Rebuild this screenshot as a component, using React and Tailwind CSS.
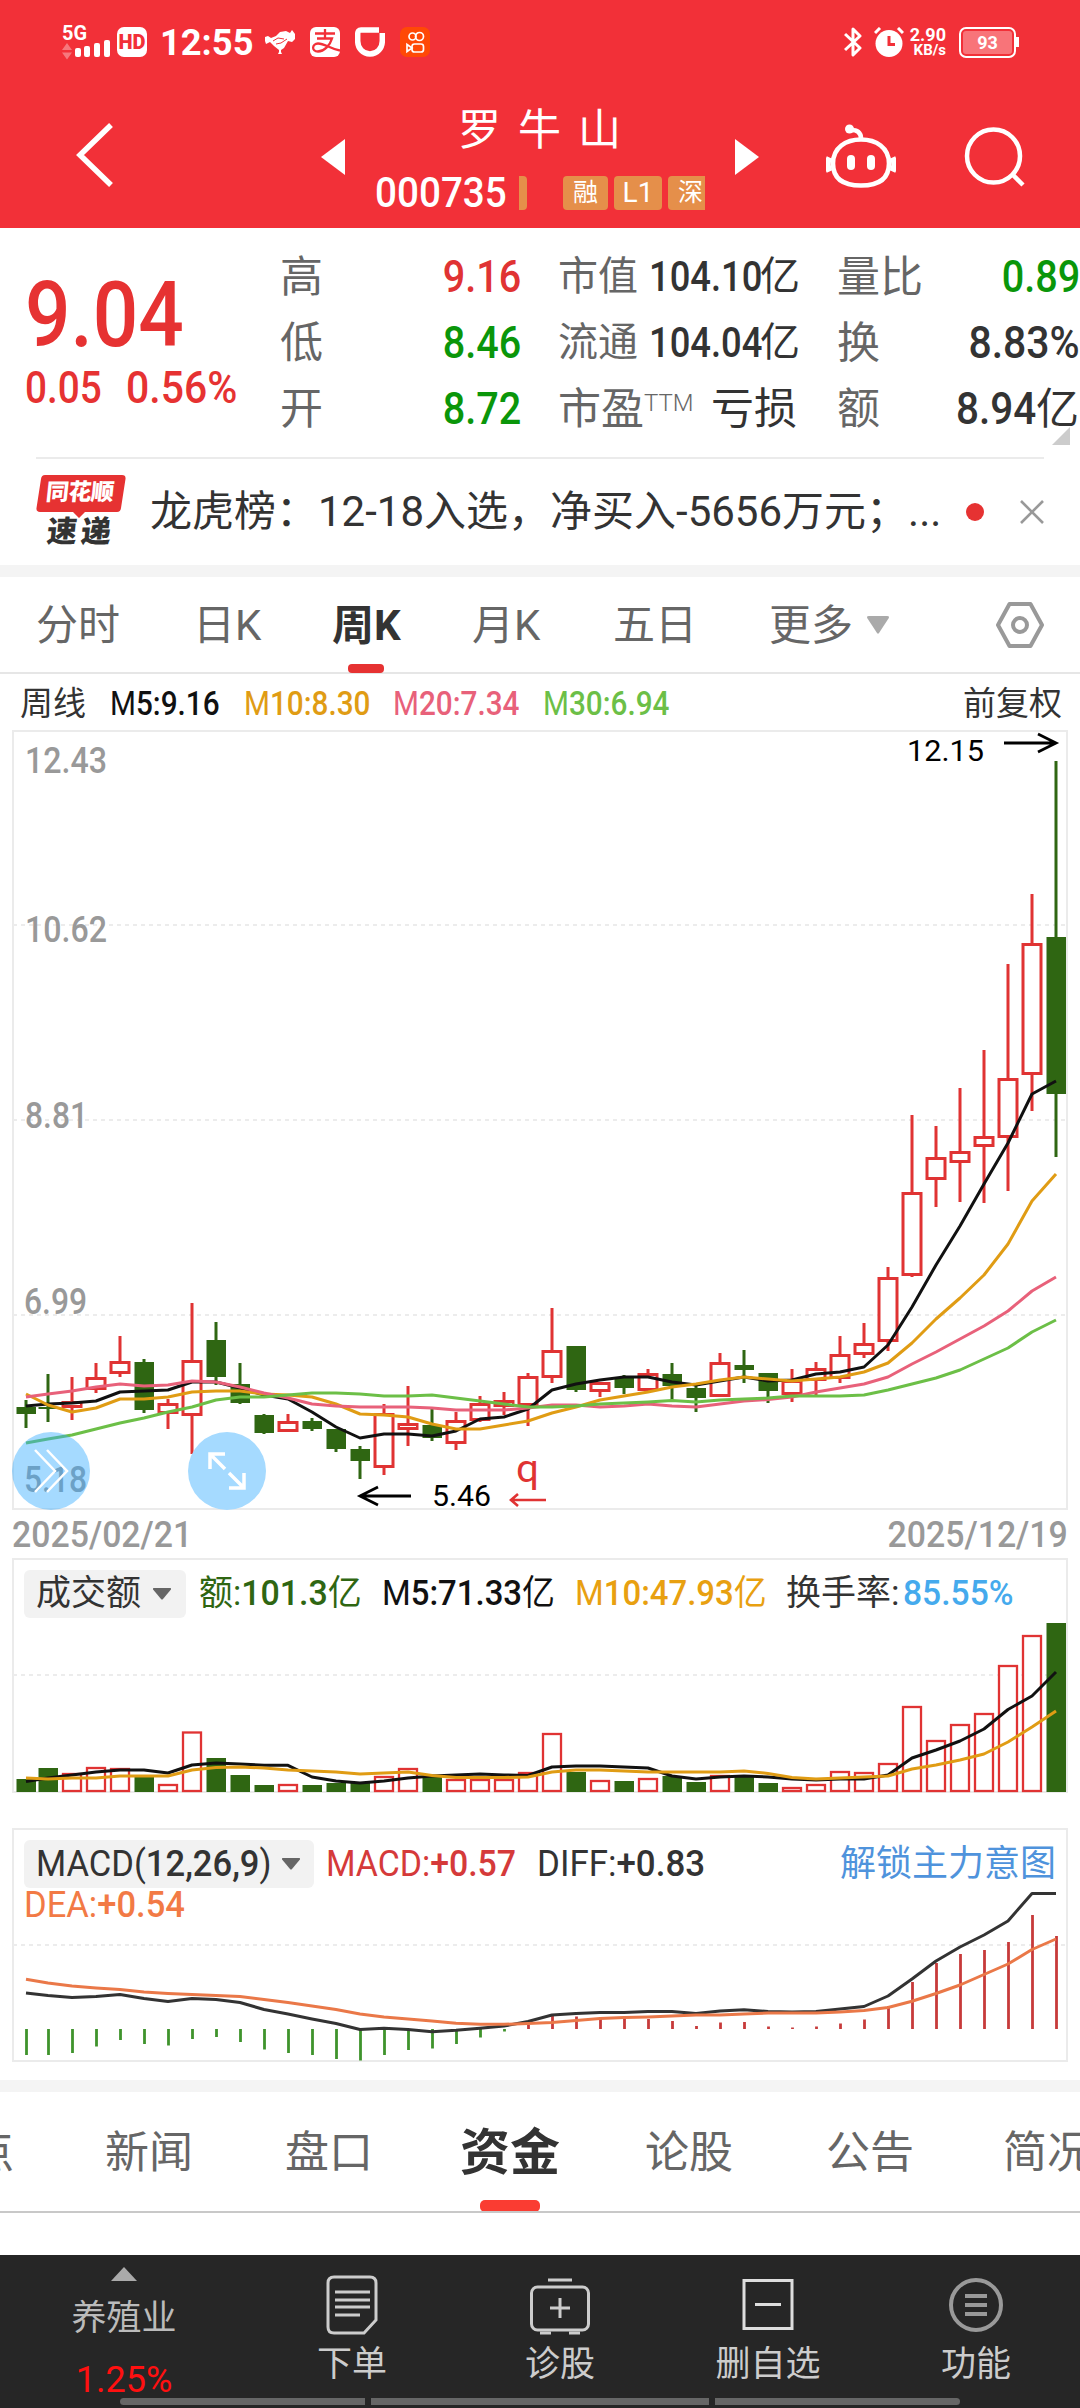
const RED = '#e03333';
const GREEN = '#2f6612';

// [direction, high, low, body top, body bottom]
const candles = [
  ['d', 1400, 1428, 1407, 1414], ['d', 1374, 1422, 1407, 1409], ['u', 1377, 1420, 1401, 1408],
  ['u', 1363, 1393, 1377, 1390], ['u', 1336, 1377, 1361, 1374], ['d', 1359, 1413, 1362, 1410],
  ['u', 1399, 1429, 1403, 1414], ['u', 1303, 1454, 1360, 1416], ['d', 1322, 1385, 1340, 1377],
  ['d', 1363, 1404, 1384, 1403], ['d', 1414, 1434, 1415, 1433], ['u', 1414, 1432, 1421, 1432],
  ['d', 1418, 1431, 1421, 1429], ['d', 1429, 1452, 1429, 1449], ['d', 1446, 1479, 1449, 1461],
  ['u', 1404, 1475, 1413, 1468], ['u', 1386, 1446, 1423, 1430], ['d', 1409, 1441, 1425, 1438],
  ['u', 1412, 1450, 1420, 1444], ['u', 1396, 1422, 1403, 1421], ['u', 1392, 1415, 1400, 1407],
  ['u', 1373, 1426, 1376, 1406], ['u', 1308, 1383, 1350, 1378], ['d', 1346, 1392, 1346, 1390],
  ['u', 1382, 1397, 1382, 1392], ['d', 1375, 1394, 1377, 1388], ['u', 1369, 1392, 1373, 1391],
  ['d', 1363, 1400, 1374, 1386], ['d', 1386, 1412, 1388, 1398], ['u', 1353, 1397, 1362, 1397],
  ['d', 1350, 1383, 1365, 1370], ['d', 1373, 1403, 1373, 1391], ['u', 1369, 1402, 1380, 1395],
  ['u', 1362, 1395, 1368, 1381], ['u', 1336, 1383, 1354, 1379], ['u', 1323, 1358, 1343, 1355],
  ['u', 1267, 1351, 1277, 1342], ['u', 1115, 1277, 1192, 1276], ['u', 1126, 1207, 1157, 1180],
  ['u', 1088, 1202, 1151, 1163], ['u', 1050, 1203, 1136, 1147], ['u', 964, 1191, 1078, 1138],
  ['u', 894, 1111, 943, 1075], ['d', 761, 1157, 937, 1094],
];

const ma5 = [1406, 1404, 1403, 1401, 1392, 1391, 1390, 1382, 1382, 1388, 1395, 1399, 1412, 1427, 1438, 1434, 1434, 1436, 1431, 1419, 1417, 1409, 1390, 1384, 1380, 1377, 1377, 1382, 1385, 1381, 1377, 1381, 1380, 1374, 1372, 1367, 1345, 1307, 1265, 1226, 1184, 1143, 1094, 1081];
const ma10 = [1394, 1405, 1412, 1408, 1399, 1399, 1397, 1392, 1391, 1391, 1394, 1395, 1397, 1404, 1414, 1415, 1417, 1424, 1429, 1429, 1425, 1421, 1413, 1407, 1400, 1396, 1392, 1387, 1384, 1380, 1377, 1379, 1381, 1379, 1377, 1372, 1363, 1343, 1319, 1298, 1275, 1244, 1201, 1174];
const ma20 = [1397, 1394, 1391, 1387, 1384, 1386, 1385, 1381, 1382, 1387, 1393, 1398, 1404, 1406, 1407, 1407, 1407, 1408, 1410, 1410, 1410, 1408, 1405, 1405, 1407, 1406, 1404, 1406, 1407, 1404, 1401, 1399.5, 1397, 1392, 1388, 1384, 1377, 1364, 1352, 1339, 1326, 1311, 1291, 1277];
const ma30 = [1443, 1439, 1435, 1429, 1423, 1418, 1412, 1407, 1400, 1397, 1397, 1395, 1393, 1393, 1394, 1396, 1396, 1395, 1398, 1401, 1404, 1407, 1407, 1406, 1404, 1403, 1402, 1400.5, 1402, 1400, 1399, 1398, 1396, 1396, 1396, 1395, 1390, 1384, 1378, 1370, 1359, 1348, 1332, 1320];

// heights above the baseline
const vol = [13, 24, 19, 25, 24, 15, 8, 60.5, 34, 17, 7, 8, 7, 9, 10, 16, 24, 15, 13, 13, 13, 20, 59, 20, 12, 11, 14, 16, 10, 17, 15, 9, 5, 8, 21, 20, 29, 86, 52, 68, 79, 127, 157, 169];
const vol5 = [10.5, 14, 17, 20, 22, 22, 19, 27, 29, 28, 26.7, 26.7, 15, 11, 9, 11, 14, 16, 17, 18, 17, 16.5, 25, 26, 26, 25, 24, 16, 13, 15, 16, 15, 13, 12, 13, 13, 17, 34, 42, 51, 63, 82.5, 96, 120];
const vol10 = [14, 13, 14, 14, 16, 16, 16, 22, 24.5, 25, 24, 22, 21, 20, 18, 19, 20, 16.5, 14.5, 14.5, 14.5, 15, 20, 22, 22, 21, 20, 20, 20, 20, 21, 18.6, 14.5, 13, 14, 15, 16, 23, 27, 32, 38, 50, 65, 81];
const macd = [-26, -26, -24, -17.5, -11, -15, -16.5, -10, -8, -13, -20.5, -24, -26, -30, -31.5, -26, -21, -19.5, -15, -8.5, -2.5, 4.5, 13, 12.5, 11.5, 10, 10, 8, 3, 6.5, 7, 2.5, 1.5, 2.5, 5.5, 9.5, 23, 47, 66, 75, 79, 87, 114, 93];
const diff = [36, 33.5, 31.5, 32.5, 34.5, 30.5, 27.5, 30.5, 29.5, 26.5, 19.5, 15, 10, 5.5, -0.5, 0.7, -0.5, -2.7, -1.3, 0.7, 3, 7.5, 14, 15.5, 16.5, 16.5, 17.5, 17.5, 15.5, 18, 19.3, 17.5, 17, 17.5, 20, 22.5, 33, 50, 68, 82, 94, 108, 135.5, 135.5];
const dea = [49.7, 46, 43, 41, 39.5, 37, 35.5, 34.5, 33.5, 32.5, 29.5, 26.5, 23, 19.5, 15, 12, 10, 8, 5.7, 4.7, 4.7, 5.5, 6.5, 8.5, 10.5, 11.5, 12, 13, 14, 14, 15, 16, 16, 16, 17, 18.5, 21.5, 27.7, 35.5, 44, 54.5, 65, 79.5, 90];

const xAt = (i) => (i === 0 ? 26 : 24 + i * 24);

const Line = ({ data, color, base }) => (
  <polyline
    points={data.map((v, i) => `${xAt(i)},${base ? base - v : v}`).join(' ')}
    fill="none"
    stroke={color}
    strokeWidth="3"
    strokeLinejoin="round"
  />
);

const Grid = ({ y }) => (
  <line x1="13" x2="1067" y1={y} y2={y} stroke="#ececec" strokeWidth="2" strokeDasharray="4 4" />
);

const Label = ({ x, y, w, size = 36, color = '#999', weight = 500, children }) => (
  <text x={x} y={y} textLength={w} lengthAdjust="spacingAndGlyphs" fontSize={size} fontWeight={weight} fill={color}>
    {children}
  </text>
);

const KChart = () => (
  <svg viewBox="12 730 1056 780" className="block w-[1056px] h-[780px] overflow-visible">
    <rect x="13" y="731" width="1054" height="778" fill="none" stroke="#ebebeb" strokeWidth="2" />
    <Grid y={925} />
    <Grid y={1120} />
    <Grid y={1315} />
    <Label x={25} y={773} w={82}>12.43</Label>
    <Label x={25} y={942} w={82}>10.62</Label>
    <Label x={25} y={1128} w={63}>8.81</Label>
    <Label x={24} y={1314} w={63}>6.99</Label>
    <Label x={24} y={1492} w={63}>5.18</Label>
    {candles.map(([dir, high, low, top, bottom], i) => {
      const x = xAt(i);
      return dir === 'd' ? (
        <g key={i} fill={GREEN}>
          <rect x={x - 1.5} y={high} width="3" height={low - high} />
          <rect x={x - 9.5} y={top} width="19.5" height={bottom - top} />
        </g>
      ) : (
        <g key={i} stroke={RED} strokeWidth="3">
          <path d={`M${x} ${high}V${top}M${x} ${bottom}V${low}`} />
          <rect x={x - 9} y={top + 1.5} width="18" height={bottom - top - 3} fill="#fff" />
        </g>
      );
    })}
    <Line data={ma5} color="#111" />
    <Line data={ma10} color="#e09c14" />
    <Line data={ma20} color="#e8617a" />
    <Line data={ma30} color="#6cbf47" />
    <Label x={907} y={761} w={77} size={30} color="#000" weight={400}>12.15</Label>
    <path d="M1004 743H1055M1038 734L1056 743L1038 752" fill="none" stroke="#000" strokeWidth="2.8" />
    <Label x={432} y={1506} w={59} size={30} color="#000" weight={400}>5.46</Label>
    <path d="M411 1496H361M378 1487L360 1496L378 1505" fill="none" stroke="#000" strokeWidth="2.8" />
    <Label x={516} y={1482} w={23} size={38} color={RED} weight={400}>q</Label>
    <path d="M546 1500H512M518 1494L511 1500L518 1506" fill="none" stroke={RED} strokeWidth="2.6" />
  </svg>
);

const VolumeChart = () => (
  <svg viewBox="12 1558 1056 236" className="block w-[1056px] h-[236px]">
    <path d="M13 1792V1559H1067V1792Z" fill="none" stroke="#ebebeb" strokeWidth="2" />
    <Grid y={1675} />
    {vol.map((h, i) =>
      candles[i][0] === 'd' ? (
        <rect key={i} x={xAt(i) - 9.5} y={1792 - h} width="19.5" height={h} fill={GREEN} />
      ) : (
        <rect key={i} x={xAt(i) - 9} y={1793 - h} width="18" height={h - 2} fill="#fff" stroke={RED} strokeWidth="2.3" />
      ),
    )}
    <Line data={vol5} base={1792} color="#111" />
    <Line data={vol10} base={1792} color="#e09c14" />
  </svg>
);

const MacdChart = () => (
  <svg viewBox="12 1828 1056 234" className="block w-[1056px] h-[234px]">
    <rect x="13" y="1829" width="1054" height="232" fill="none" stroke="#ebebeb" strokeWidth="2" />
    <Grid y={1945} />
    {macd.map((h, i) => (
      <line key={i} x1={xAt(i) + 0.5} x2={xAt(i) + 0.5} y1="2029" y2={2029 - h} stroke={h < 0 ? '#3f932c' : '#c73a3a'} strokeWidth="2.8" />
    ))}
    <Line data={diff} base={2029} color="#333" />
    <Line data={dea} base={2029} color="#ea7848" />
  </svg>
);

// Condensed text held in a box of its drawn width
const Cell = ({ className = '', inner = '', children }) => (
  <span className={`flex shrink-0 whitespace-nowrap ${className}`}>
    <span className={`inline-block ${inner}`}>{children}</span>
  </span>
);

const StatusBar = () => (
  <div className="flex h-[84px] items-center pl-[62px] text-white">
    <div className="w-[50px] h-[36px]">
      <svg viewBox="62 24 50 36" className="w-[50px] h-[36px] overflow-visible" fill="#fff">
        <text x="62" y="40" fontSize="20" fontWeight="700" textLength="25" lengthAdjust="spacingAndGlyphs">5G</text>
        <path d="M62 50l5-7 5 7zM62 52.500l5 7 5-7z" fillOpacity=".35" />
        <rect x="75" y="48" width="6" height="9" rx="2" />
        <rect x="84" y="46" width="6" height="11" rx="2" />
        <rect x="94" y="43" width="6" height="14" rx="2" />
        <rect x="104" y="40" width="6" height="17" rx="2" />
      </svg>
    </div>
    <span className="ml-[5px] flex size-[30px] items-center justify-center rounded-[7px] bg-white text-[20px] font-black text-[#f23038]">
      HD
    </span>
    <Cell className="ml-[13px] w-[95px]" inner="text-[37px] leading-none font-bold origin-left scale-x-[0.98]">12:55</Cell>
    <svg viewBox="0 0 30 24" className="ml-[10px] w-[30px] h-[24px]" fill="#fff">
      <path d="M0 7l3-1 3 2 5-2 4-4 6-1 4 2 2-3 3 4v5l-3 3-4-1-4 7-3 2v2l1 2h-4l1-2v-2l-5-4-4-4-4 2-1-3z" />
      <path d="M8 11l5-3 6 1M11 14l5-1 6-4" fill="none" stroke="#f23038" strokeWidth="1" />
    </svg>
    <svg viewBox="0 0 30 30" className="ml-[15px] size-[30px]">
      <rect width="30" height="30" rx="6" fill="#fff" />
      <path d="M5 6.500h20M15 2v9M7 11.500h15c-2 7-8 13-14 13-7 0-6-8 0-8 7 0 11 5 22 7" fill="none" stroke="#f23038" strokeWidth="2.300" />
    </svg>
    <svg viewBox="0 0 30 30" className="ml-[15px] size-[30px]" fill="none" stroke="#fff" strokeWidth="5.500">
      <path d="M24 3H6Q2.700 3 2.700 7v7c0 7 5 13 12.300 13s12.300-6 12.300-13V6" />
    </svg>
    <svg viewBox="0 0 30 30" className="ml-[15px] size-[30px]" fill="none" stroke="#fff" strokeWidth="1.700">
      <rect width="30" height="30" rx="7" fill="#ff4906" stroke="none" />
      <circle cx="12.500" cy="9.500" r="3.500" />
      <circle cx="19.500" cy="9.500" r="4" />
      <rect x="12" y="17" width="11.500" height="8" rx="2.500" />
      <path d="M12 21L7 17.500v7z" />
    </svg>

    <svg viewBox="0 0 18 30" className="ml-[414px] w-[18px] h-[30px]" fill="none" stroke="#fff" strokeWidth="3" strokeLinejoin="round">
      <path d="M1 7l15 14-7 7V2l7 7L1 23" />
    </svg>
    <svg viewBox="0 0 30 30" className="ml-[12px] size-[30px]">
      <circle cx="15" cy="16.500" r="13.500" fill="#fff" />
      <path d="M1 6l5-5M29 6l-5-5" stroke="#fff" strokeWidth="3" />
      <path d="M15 9v8.500h6" fill="none" stroke="#f23038" strokeWidth="3" />
    </svg>
    <div className="ml-[6px] flex w-[36px] flex-col items-end font-bold">
      <span className="text-[18px] leading-[17px]">2.90</span>
      <span className="text-[15px] leading-[15px]">KB/s</span>
    </div>
    <div className="ml-[13px] flex h-[31px] w-[57px] items-center justify-center rounded-[7px] border-[2.500px] border-white p-[2px]">
      <div className="flex h-full w-full items-center justify-center rounded-[3px] bg-[#f87479] text-[18px] font-bold">93</div>
    </div>
    <div className="h-[10px] w-[3px] bg-white" />
  </div>
);

const Header = () => (
  <header className="h-[228px] bg-[#f23038]">
    <StatusBar />
    <div className="flex h-[144px] text-white">
      <svg viewBox="0 0 40 66" className="ml-[75px] mt-[38px] w-[40px] h-[66px]" fill="none" stroke="#fff" strokeWidth="5.500">
        <path d="M36 3L5 33l31 30" />
      </svg>
      <svg viewBox="0 0 24 36" className="ml-[206px] mt-[55px] w-[24px] h-[36px]" fill="#fff">
        <path d="M24 0v36L0 18z" />
      </svg>
      <div className="ml-[30px] mt-[16px] w-[332px]">
        <div className="pl-[83px] text-[43px] leading-[60px] tracking-[17px] whitespace-nowrap">罗牛山</div>
        <div className="mt-[14px] flex h-[38px] items-center">
          <Cell className="w-[144px]" inner="text-[42px] leading-[38px] font-medium origin-left scale-x-[0.92]">000735</Cell>
          <span className="h-[34px] w-[8px] rounded-r-[4px] bg-[#e58f4a]" />
          <div className="ml-[36px] flex h-[34px] w-[142px] gap-[6px] overflow-hidden text-[25px] leading-[33px]">
            <span className="w-[45px] shrink-0 rounded-[4px] bg-[#e58f4a] text-center">融</span>
            <span className="w-[48px] shrink-0 rounded-[4px] bg-[#e58f4a] text-center text-[28px]">L1</span>
            <span className="w-[48px] shrink-0 rounded-[4px] bg-[#e58f4a] pl-[10px]">深</span>
          </div>
        </div>
      </div>
      <svg viewBox="0 0 24 36" className="ml-[28px] mt-[55px] w-[24px] h-[36px]" fill="#fff">
        <path d="M0 0v36l24-18z" />
      </svg>
      <svg viewBox="0 0 70 66" className="ml-[67px] mt-[40px] w-[70px] h-[66px]" fill="none" stroke="#fff" strokeWidth="4.600">
        <path d="M35 15.500c15 0 28 8 28 24 0 15-10 22-28 22S7 54.500 7 39.500c0-16 13-24 28-24z" />
        <path d="M35 15c0-7-4-9-10-9" />
        <circle cx="23.500" cy="5" r="4.500" fill="#fff" stroke="none" />
        <path d="M3.500 33.500q-3.500 7 0 14M66.500 33.500q3.500 7 0 14" strokeWidth="6" />
        <rect x="21" y="31" width="8" height="15" rx="4" fill="#fff" stroke="none" />
        <rect x="41" y="31" width="8" height="15" rx="4" fill="#fff" stroke="none" />
      </svg>
      <svg viewBox="0 0 62 64" className="ml-[67px] mt-[41px] w-[62px] h-[64px]" fill="none" stroke="#fff" strokeWidth="4.500">
        <circle cx="30.500" cy="31" r="26.500" />
        <path d="M49 49l11 11" />
      </svg>
    </div>
  </header>
);

const Quote = () => (
  <section className="flex h-[229px] pt-[16px]">
    <div className="w-[280px] pl-[25px] text-[#e63232]">
      <Cell className="h-[102px]" inner="mt-[25px] text-[91px] leading-[92px] font-medium origin-left scale-x-[0.88]">9.04</Cell>
      <div className="mt-[17px] flex h-[50px]">
        <Cell className="w-[101px]" inner="text-[44px] leading-[50px] origin-left font-medium scale-x-[0.88]">0.05</Cell>
        <Cell inner="text-[44px] leading-[50px] origin-left font-medium scale-x-[0.93]">0.56%</Cell>
      </div>
    </div>
    <div className="w-[241px] text-[43px] leading-[66px]">
      {[['高', '9.16', 'text-[#e03333]'], ['低', '8.46', 'text-[#0a960a]'], ['开', '8.72', 'text-[#0a960a]']].map(([k, v, c]) => (
        <div key={k} className="flex h-[66px] justify-between">
          <span className="text-[#666]">{k}</span>
          <Cell className={c} inner="text-[44px] font-medium origin-right scale-x-[0.9]">{v}</Cell>
        </div>
      ))}
    </div>
    <div className="ml-[37px] w-[242px] text-[40px] leading-[66px] text-[#333]">
      {[['市值', '104.10'], ['流通', '104.04']].map(([k, v]) => (
        <div key={k} className="flex h-[66px]">
          <span className="w-[91px] text-[#666]">{k}</span>
          <Cell className="w-[111px]" inner="text-[42px] font-medium origin-left scale-x-[0.865]">{v}</Cell>
          <span>亿</span>
        </div>
      ))}
      <div className="flex h-[66px] justify-between text-[43px]">
        <span className="flex text-[#666]">
          市盈
          <span className="-mt-[6px] text-[24px] font-light">TTM</span>
        </span>
        <span className="mr-[3px]">亏损</span>
      </div>
    </div>
    <div className="ml-[37px] w-[243px] text-[43px] leading-[66px] text-[#333]">
      <div className="flex h-[66px] justify-between">
        <span className="text-[#666]">量比</span>
        <Cell className="text-[#0a960a]" inner="text-[44px] font-medium origin-right scale-x-[0.9]">0.89</Cell>
      </div>
      <div className="flex h-[66px] justify-between">
        <span className="text-[#666]">换</span>
        <Cell inner="text-[44px] font-medium origin-right scale-x-[0.93]">8.83%</Cell>
      </div>
      <div className="flex h-[66px]">
        <span className="w-[109px] text-[#666]">额</span>
        <Cell className="w-[90px] justify-end" inner="text-[44px] font-medium origin-right scale-x-[0.92]">8.94</Cell>
        <span>亿</span>
      </div>
      <svg viewBox="0 0 18 18" className="-mt-[15px] ml-[215px] size-[18px]" fill="#ccc">
        <path d="M18 0v18H0z" />
      </svg>
    </div>
  </section>
);

const News = () => (
  <section className="mx-[36px] flex h-[108px] items-center border-t-2 border-[#ebebeb]">
    <div className="relative h-[74px] w-[90px]">
      <svg viewBox="0 0 90 44" className="absolute left-0 top-0 w-[90px] h-[44px]" fill="#e63232">
        <path d="M9 0h77q4 0 3.500 4L85 33q-.5 4-4 4H49l-6 6-6-6H4q-4 0-3.500-4L5 4q.5-4 4-4z" />
      </svg>
      <div className="relative pl-[10px] text-[23px] leading-[36px] font-black tracking-[-0.500px] text-white -skew-x-6">同花顺</div>
      <div className="relative mt-[5px] pl-[11px] text-[30px] leading-[32px] font-black tracking-[4px] whitespace-nowrap text-[#333] -skew-x-6">速递</div>
    </div>
    <p className="ml-[24px] w-[801px] text-[42px] leading-[60px] whitespace-nowrap text-[#333]">
      龙虎榜：12-18入选，净买入-5656万元；...
    </p>
    <span className="ml-[15px] size-[18px] shrink-0 rounded-full bg-[#e63232]" />
    <svg viewBox="0 0 24 24" className="ml-[36px] size-[24px] shrink-0" stroke="#999" strokeWidth="2.600">
      <path d="M1 1l22 22M23 1L1 23" />
    </svg>
  </section>
);

const PeriodTabs = () => (
  <nav className="flex h-[97px] border-b-2 border-[#e6e6e6] pl-[36px] text-[42px] leading-[98px] whitespace-nowrap text-[#666]">
    <span className="w-[157px]">分时</span>
    <span className="w-[139px]">日K</span>
    <span className="relative w-[140px] font-bold text-[#333]">
      周K
      <i className="absolute left-[16px] top-[87px] h-[9px] w-[36px] rounded-[4px] bg-[#e63232]" />
    </span>
    <span className="w-[141px]">月K</span>
    <span className="w-[156px]">五日</span>
    <span className="w-[98px]">更多</span>
    <svg viewBox="0 0 22 18" className="mt-[39px] w-[22px] h-[18px]" fill="#aaa">
      <path d="M2 0h18q3 0 1.500 2.500L12 17q-1 1.500-2 0L.5 2.500Q-1 0 2 0z" />
    </svg>
    <svg viewBox="0 0 50 48" className="ml-[106px] mt-[24px] w-[50px] h-[48px]" fill="none" stroke="#999" strokeWidth="4" strokeLinejoin="round">
      <path d="M14.500 3h21L47 24 35.500 45h-21L3 24z" />
      <circle cx="25" cy="24" r="7" />
    </svg>
  </nav>
);

const Caret = ({ className }) => (
  <svg viewBox="0 0 18 12" className={`w-[18px] h-[12px] shrink-0 ${className}`} fill="#666">
    <path d="M1 0h16q2 0 .5 2L10 11q-1 1-2 0L.5 2Q-1 0 1 0z" />
  </svg>
);

const InfoTabs = () => (
  <nav className="flex h-[121px] overflow-hidden border-b-2 border-[#c8c8c8] text-[44px] leading-[122px] whitespace-nowrap text-[#666]">
    <span className="-ml-[30px] w-[135px] shrink-0">点</span>
    <span className="w-[180px] shrink-0">新闻</span>
    <span className="w-[175px] shrink-0">盘口</span>
    <span className="relative w-[185px] shrink-0 text-[50px] font-bold text-[#333]">
      资金
      <i className="absolute left-[20px] top-[108px] h-[12px] w-[60px] rounded-[5px] bg-[#fa3c32]" />
    </span>
    <span className="w-[181px] shrink-0">论股</span>
    <span className="w-[177px] shrink-0">公告</span>
    <span className="shrink-0">简况</span>
  </nav>
);

const BottomBar = () => (
  <footer className="flex h-[153px] flex-col bg-[#262626] text-[35px] text-[#ccc]">
    <div className="flex h-[143px]">
      <div className="ml-[44px] flex w-[160px] flex-col items-center text-[#bbb]">
        <svg viewBox="0 0 26 14" className="mt-[12px] w-[26px] h-[14px] shrink-0" fill="#aaa">
          <path d="M13 0l13 14H0z" />
        </svg>
        <span className="mt-[17px] leading-[42px]">养殖业</span>
        <span className="mt-[20px] text-[36px] leading-[40px] text-[#ff1010]">1.25%</span>
      </div>
      <div className="ml-[68px] flex w-[160px] flex-col items-center">
        <svg viewBox="0 0 52 60" className="mt-[20px] w-[52px] h-[60px]" fill="none" stroke="#ccc" strokeWidth="3">
          <path d="M8 2h36q6 0 6 6v37L38 58H8q-6 0-6-6V8q0-6 6-6z" />
          <path d="M9 17h35M9 25h35M9 32h35M9 40h25" />
        </svg>
        <span className="mt-[9px] leading-[42px]">下单</span>
      </div>
      <div className="ml-[48px] flex w-[160px] flex-col items-center">
        <svg viewBox="0 0 60 60" className="mt-[20px] size-[60px]" fill="none" stroke="#ccc" strokeWidth="3">
          <rect x="1.500" y="12" width="57" height="43" rx="6" />
          <path d="M18 5h24M30 23v20M20 33h20M10 58h11M39 58h11" />
        </svg>
        <span className="mt-[9px] leading-[42px]">诊股</span>
      </div>
      <div className="ml-[48px] flex w-[160px] flex-col items-center">
        <svg viewBox="0 0 52 60" className="mt-[20px] w-[52px] h-[60px]" fill="none" stroke="#ddd" strokeWidth="3">
          <path d="M2 5.500h48v48H2zM13 29.500h26" />
        </svg>
        <span className="mt-[9px] leading-[42px]">删自选</span>
      </div>
      <div className="ml-[48px] flex w-[160px] flex-col items-center">
        <svg viewBox="0 0 54 60" className="mt-[20px] w-[54px] h-[60px]" fill="none" stroke="#999" strokeWidth="4">
          <circle cx="27" cy="30" r="25" />
          <path d="M16 21h22M16 30h22M16 39h22" />
        </svg>
        <span className="mt-[9px] leading-[42px]">功能</span>
      </div>
    </div>
    <div className="ml-[120px] flex h-[7px] gap-[6px]">
      <span className="w-[245px] rounded-l-full bg-[#666]" />
      <span className="w-[338px] bg-[#666]" />
      <span className="w-[245px] rounded-r-full bg-[#666]" />
    </div>
  </footer>
);

const App = () => (
  <main className="h-[2408px] w-[1080px] overflow-hidden bg-white font-['Roboto','Noto_Sans_CJK_SC',sans-serif]">
    <Header />
    <Quote />
    <News />
    <div className="h-[12px] bg-[#f4f4f4]" />
    <PeriodTabs />

    {/* Moving average legend */}
    <div className="flex h-[56px] pl-[20px] text-[33px] leading-[60px] whitespace-nowrap text-[#333]">
      <span className="w-[90px]">周线</span>
      <Cell className="w-[134px] text-[#111]" inner="origin-left scale-x-[0.9]">M<b className="font-medium">5:9.16</b></Cell>
      <Cell className="w-[149px] text-[#e09c14]" inner="origin-left scale-x-[0.9]">M<b className="font-medium">10:8.30</b></Cell>
      <Cell className="w-[150px] text-[#e8617a]" inner="origin-left scale-x-[0.9]">M<b className="font-medium">20:7.34</b></Cell>
      <Cell className="w-[420px] text-[#6cbf47]" inner="origin-left scale-x-[0.9]">M<b className="font-medium">30:6.94</b></Cell>
      <span>前复权</span>
    </div>

    <section className="relative ml-[12px]">
      <KChart />
      <button className="absolute left-0 top-[702px] flex size-[78px] items-center justify-center rounded-full bg-[#32abff]/44">
        <svg viewBox="0 0 36 44" className="w-[36px] h-[44px]" fill="none" stroke="#fff" strokeWidth="2.500">
          <path d="M2 1l20 21L2 43M14 1l20 21-20 21" />
        </svg>
      </button>
      <button className="absolute left-[176px] top-[702px] flex size-[78px] items-center justify-center rounded-full bg-[#a5daff]">
        <svg viewBox="0 0 38 38" className="size-[38px]" fill="none" stroke="#fff" strokeWidth="3.500">
          <path d="M17 2H2v15M2 2l15 15M21 36h15V21M36 36L21 21" />
        </svg>
      </button>
    </section>
    <div className="flex h-[48px] justify-between px-[12px] text-[36px] leading-[50px] font-medium text-[#999]">
      <Cell inner="origin-left scale-x-[0.94]">2025/02/21</Cell>
      <Cell inner="origin-right scale-x-[0.94]">2025/12/19</Cell>
    </div>

    {/* Turnover */}
    <section className="relative ml-[12px] h-[270px]">
      <VolumeChart />
      <div className="absolute left-[12px] top-[12px] flex h-[48px] items-center text-[35px] leading-[50px] whitespace-nowrap">
        <span className="flex h-[48px] w-[162px] items-center rounded-[6px] bg-[#f2f2f2] pl-[12px] text-[#333]">
          成交额
          <Caret className="ml-[12px]" />
        </span>
        <Cell className="ml-[13px] w-[183px] text-[#2f6612]" inner="origin-left scale-x-[0.97]">额:<b className="font-medium">101.3</b>亿</Cell>
        <Cell className="w-[193px] text-[#111]" inner="origin-left scale-x-[0.94]">M<b className="font-medium">5:71.33</b>亿</Cell>
        <Cell className="w-[211px] text-[#e8a010]" inner="origin-left scale-x-[0.94]">M<b className="font-medium">10:47.93</b>亿</Cell>
        <Cell className="w-[117px] text-[#333]">换手率:</Cell>
        <Cell className="text-[#45aaed]" inner="origin-left font-medium scale-x-[0.96]">85.55%</Cell>
      </div>
    </section>

    {/* MACD */}
    <section className="relative ml-[12px] h-[252px]">
      <MacdChart />
      <div className="absolute left-[12px] top-[12px] flex h-[48px] items-center text-[36px] leading-[50px] whitespace-nowrap">
        <span className="flex h-[48px] w-[290px] items-center rounded-[6px] bg-[#f2f2f2] pl-[12px] text-[#333]">
          <Cell className="w-[246px]" inner="origin-left scale-x-[0.96]">MACD(<b className="font-medium">12,26,9</b>)</Cell>
          <Caret className="" />
        </span>
        <Cell className="ml-[12px] w-[211px] text-[#d53a3a]" inner="origin-left scale-x-[0.94]">MACD:<b className="font-medium">+0.57</b></Cell>
        <Cell className="w-[303px] text-[#333]" inner="origin-left scale-x-[0.97]">DIFF:<b className="font-medium">+0.83</b></Cell>
        <span className="text-[#4f93dc]">解锁主力意图</span>
      </div>
      <Cell className="absolute left-[12px] top-[57px] text-[36px] leading-[40px] text-[#f27a45]" inner="origin-left scale-x-[0.96]">DEA:<b className="font-medium">+0.54</b></Cell>
    </section>

    <div className="h-[12px] bg-[#f4f4f4]" />
    <InfoTabs />
    <div className="h-[42px]" />
    <BottomBar />
  </main>
);

export default App;
